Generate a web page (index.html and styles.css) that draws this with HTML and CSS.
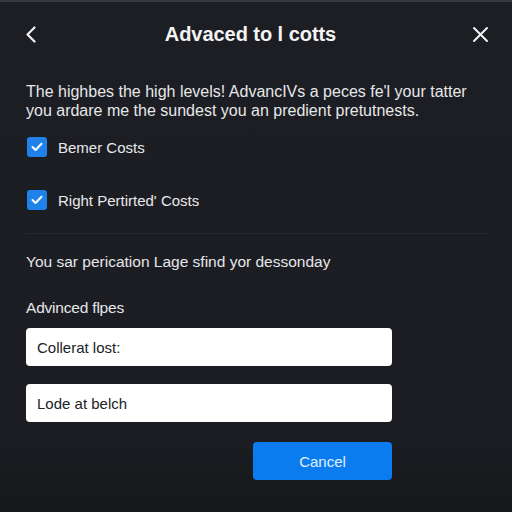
FILE: index.html
```html
<!DOCTYPE html>
<html lang="en">
<head>
<meta charset="utf-8">
<title>Advaced to l cotts</title>
<link rel="stylesheet" href="styles.css">
</head>
<body>
<div class="dialog">
  <header class="header">
    <button class="icon-btn" aria-label="Back">
      <svg width="12" height="17" viewBox="0 0 12 17"><polyline points="9.5,1.5 2.5,8.5 9.5,15.5" fill="none" stroke="#f2f2f2" stroke-width="2.2" stroke-linecap="round" stroke-linejoin="round"/></svg>
    </button>
    <h1 class="title">Advaced to l cotts</h1>
    <button class="icon-btn" aria-label="Close">
      <svg width="17" height="17" viewBox="0 0 17 17"><path d="M2 2 L15 15 M15 2 L2 15" fill="none" stroke="#f2f2f2" stroke-width="2" stroke-linecap="round"/></svg>
    </button>
  </header>
  <main class="content">
    <p class="intro">The highbes the high levels! AdvancIVs a peces fe'l your tatter you ardare me the sundest you an predient pretutnests.</p>
    <label class="check first"><span class="box"><svg width="12" height="10" viewBox="0 0 12 10"><polyline points="1.5,5 4.6,8 10.5,1.8" fill="none" stroke="#fff" stroke-width="2" stroke-linecap="round" stroke-linejoin="round"/></svg></span><span class="check-label">Bemer Costs</span></label>
    <label class="check second"><span class="box"><svg width="12" height="10" viewBox="0 0 12 10"><polyline points="1.5,5 4.6,8 10.5,1.8" fill="none" stroke="#fff" stroke-width="2" stroke-linecap="round" stroke-linejoin="round"/></svg></span><span class="check-label">Right Pertirted' Costs</span></label>
    <hr class="divider">
    <p class="note">You sar perication Lage sfind yor dessonday</p>
    <p class="section">Advinced flpes</p>
    <div class="form">
      <div class="field first">Collerat lost:</div>
      <div class="field second">Lode at belch</div>
      <div class="actions"><button class="primary">Cancel</button></div>
    </div>
  </main>
</div>
</body>
</html>
```
FILE: styles.css
```css
html, body {
  margin: 0;
  padding: 0;
}
body {
  width: 512px;
  height: 512px;
  background: linear-gradient(#1c1e23 0%, #1b1d22 85%, #16181c 100%);
  font-family: "Liberation Sans", Arial, sans-serif;
  color: #e4e5e7;
  overflow: hidden;
}
.dialog {
  border-top: 2px solid #35383d;
  height: 510px;
  box-sizing: border-box;
}
.header {
  height: 64px;
  display: flex;
  align-items: center;
  justify-content: space-between;
  padding: 0 23px 0 25px;
}
.icon-btn {
  background: none;
  border: 0;
  padding: 0;
  display: flex;
  align-items: center;
  cursor: pointer;
}
.title {
  margin: 0 8px 0 0;
  font-size: 20px;
  font-weight: 700;
  color: #f4f4f5;
  letter-spacing: -0.05px;
}
.content {
  padding: 0 24px 0 26px;
}
.intro {
  margin: 16px 0 0;
  font-size: 16px;
  line-height: 19px;
  color: #e6e7e9;
}
.check {
  display: flex;
  align-items: center;
  gap: 11px;
  height: 20px;
  padding-left: 1px;
}
.check.first { margin-top: 17px; }
.check.second { margin-top: 33px; }
.box {
  width: 20px;
  height: 20px;
  border-radius: 3px;
  background: #1f82ea;
  display: flex;
  align-items: center;
  justify-content: center;
}
.check-label {
  font-size: 15px;
  color: #e8e9eb;
}
.divider {
  margin: 23px 0 0;
  border: 0;
  height: 1px;
  background: #262930;
}
.note {
  margin: 18px 0 0;
  font-size: 15.5px;
  line-height: 20px;
  color: #e6e7e9;
}
.section {
  margin: 26px 0 0;
  font-size: 15.5px;
  line-height: 20px;
  color: #e6e7e9;
  letter-spacing: -0.2px;
}
.form {
  width: 366px;
  margin-top: 10px;
  display: flex;
  flex-direction: column;
}
.field {
  height: 38px;
  background: #ffffff;
  border-radius: 4px;
  display: flex;
  align-items: center;
  padding-left: 11px;
  font-size: 15px;
  color: #202226;
}
.field.second { margin-top: 18px; }
.actions {
  display: flex;
  justify-content: flex-end;
  margin-top: 20px;
}
.primary {
  width: 139px;
  height: 38px;
  border: 0;
  border-radius: 4px;
  background: #0a7cf0;
  color: #e3efff;
  font-family: "Liberation Sans", Arial, sans-serif;
  font-size: 15px;
}
```
